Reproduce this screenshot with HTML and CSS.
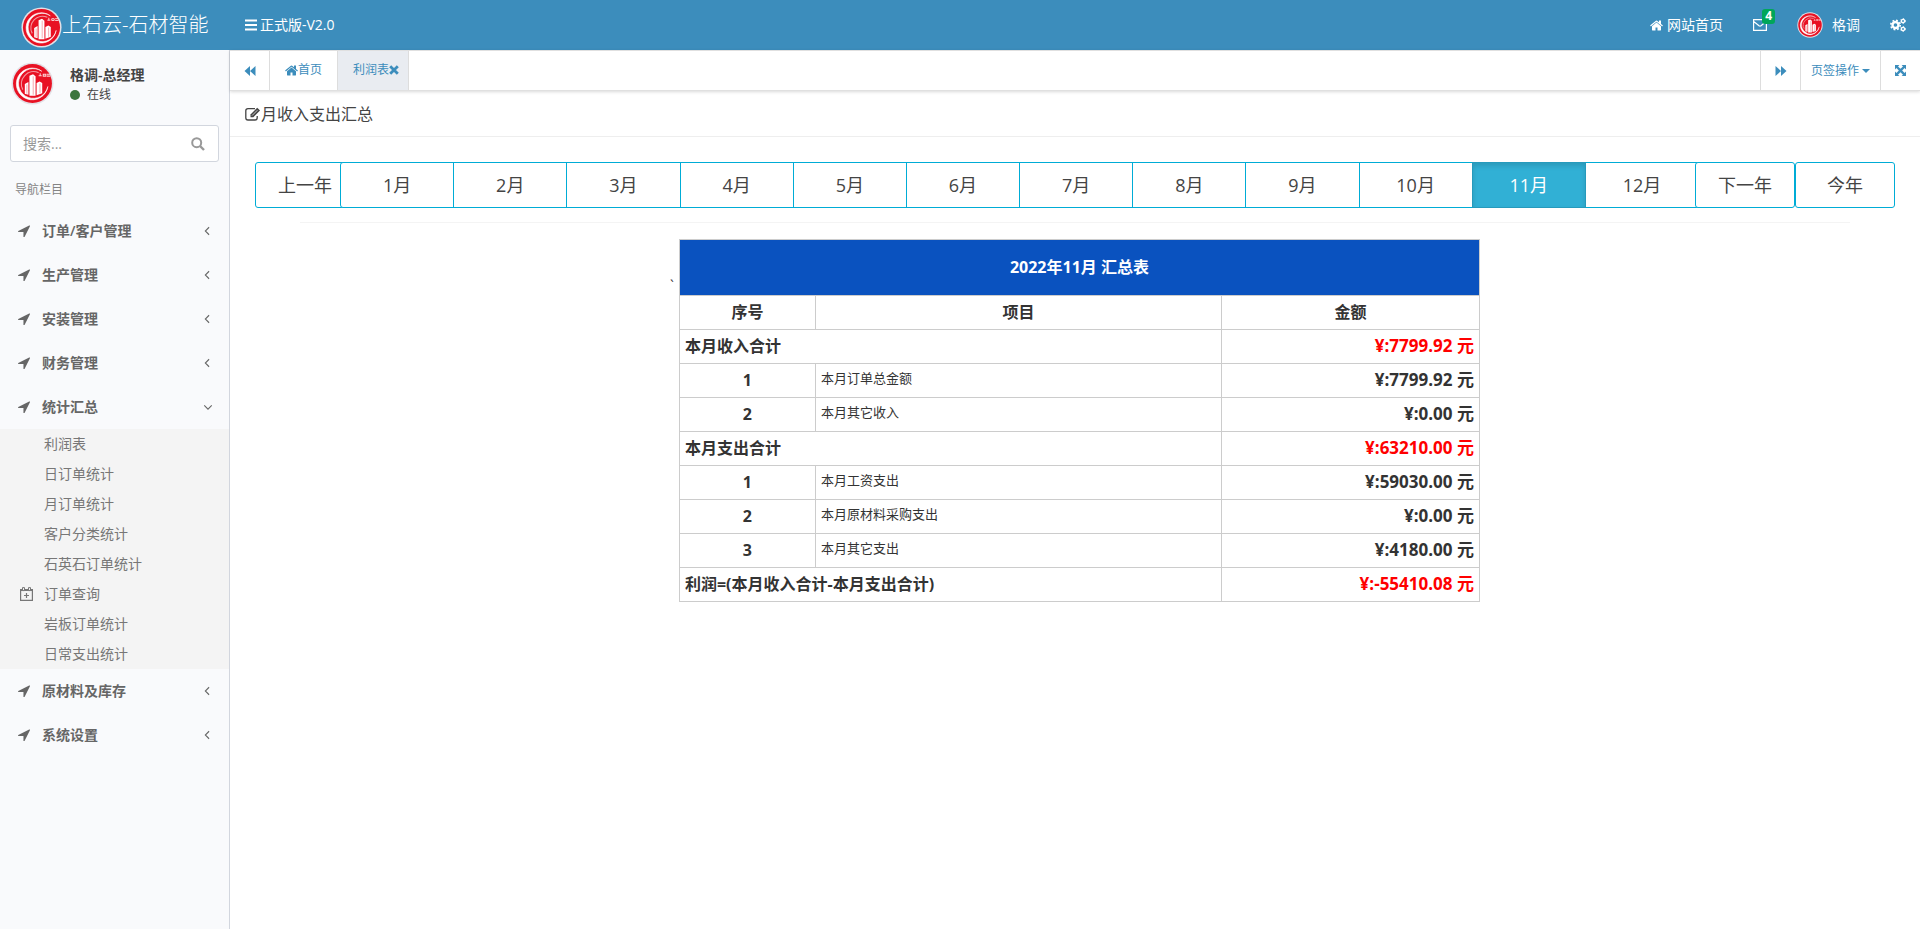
FILE: index.html
```
<!DOCTYPE html>
<html lang="zh-CN">
<head>
<meta charset="utf-8">
<title>上石云-石材智能</title>
<link rel="stylesheet" href="styles.css">
</head>
<body>
<svg class="defs" aria-hidden="true">
  <symbol id="logo" viewBox="0 0 42 42">
    <circle cx="21" cy="21" r="20.5" fill="#e3e0e6"/>
    <circle cx="21" cy="21" r="19" fill="#e81123"/>
    <path d="M30 9A15.500 15.500 0 1 0 36 24 14.500 14.500 0 1 1 30 9z" fill="#fff" stroke="#fff" stroke-width=".6"/>
    <path d="M27 10.500A12 12 0 0 0 11.500 27" fill="none" stroke="#f4959d" stroke-width="1.200"/>
    <path d="M13.500 31V21.500l3.500-2V32zM18 33V13.500l3.500-1.500 2.500 2v19zM25 32.500V20.500l3-1.500 2.500 1.500v10z" fill="#fff"/>
    <path d="M21.700 14v18M28.300 21v9.500M15.500 22v9" stroke="#f4959d" stroke-width=".8"/>
    <path d="M27 13.500h3M28.500 11v2.500M31.500 12h2.500v1.800h-2.500zM35 12h3.500M35 13.800h3.500" fill="none" stroke="#fbd5d8" stroke-width="1"/>
  </symbol>
  <symbol id="home" viewBox="0 0 1664 1536"><path d="M1408 928v480q0 26-19 45t-45 19H960v-384H704v384H320q-26 0-45-19t-19-45V928q0-1 .5-3t.5-3l575-474 575 474q1 2 1 6zm223-69l-62 74q-8 9-21 11h-3q-13 0-21-7L832 360 140 937q-12 8-24 7-13-2-21-11l-62-74q-8-10-7-23.500T37 814l719-599q32-26 76-26t76 26l244 204V224q0-14 9-23t23-9h192q14 0 23 9t9 23v408l219 182q10 8 11 21.500t-7 23.500z"/></symbol>
  <symbol id="arrow" viewBox="0 0 1408 1408"><path d="M1401 137l-640 1280q-17 35-57 35-5 0-15-2-22-5-35.500-22.500T640 1388V812H64q-22 0-39.500-13.500T2 763t4-42 29-30L1315 51q13-7 29-7 27 0 45 19 15 14 18.500 34.500T1401 137z"/></symbol>
  <symbol id="left" viewBox="0 0 8 12"><path d="M6.500 1.500 2 6l4.500 4.500" fill="none" stroke="currentColor" stroke-width="1.300"/></symbol>
  <symbol id="down" viewBox="0 0 12 8"><path d="M1.500 1.500 6 6l4.500-4.500" fill="none" stroke="currentColor" stroke-width="1.300"/></symbol>
  <symbol id="back" viewBox="0 0 12 10"><path d="M6 0v10L0.500 5zM11.500 0v10L6 5z"/></symbol>
  <symbol id="forward" viewBox="0 0 12 10"><path d="M6 0v10l5.500-5zM.5 0v10L6 5z"/></symbol>
  <symbol id="cogs" viewBox="0 0 16 14">
    <circle cx="5.500" cy="7" r="3" fill="none" stroke="currentColor" stroke-width="2.400"/>
    <circle cx="5.500" cy="7" r="4.700" fill="none" stroke="currentColor" stroke-width="1.600" stroke-dasharray="1.850 1.840"/>
    <circle cx="13" cy="3" r="1.600" fill="none" stroke="currentColor" stroke-width="1.300"/>
    <circle cx="13" cy="3" r="2.400" fill="none" stroke="currentColor" stroke-width="1" stroke-dasharray="1.260 1.250"/>
    <circle cx="13" cy="11" r="1.600" fill="none" stroke="currentColor" stroke-width="1.300"/>
    <circle cx="13" cy="11" r="2.400" fill="none" stroke="currentColor" stroke-width="1" stroke-dasharray="1.260 1.250"/>
  </symbol>
</svg>

<header class="topbar">
  <a class="brand" href="#"><svg class="brand-logo"><use href="#logo"/></svg><span>上石云-石材智能</span></a>
  <button class="version" type="button"><svg class="bars" viewBox="0 0 12 12"><path d="M0 1.500h12M0 6h12M0 10.500h12" stroke="currentColor" stroke-width="2"/></svg>正式版-V2.0</button>
  <nav class="top-links">
    <a class="top-link" href="#"><svg class="icon-home"><use href="#home"/></svg>网站首页</a>
    <a class="top-link mail" href="#" aria-label="消息"><svg class="icon-mail" viewBox="0 0 14 12"><path d="M.6.600h12.800v10.800H.6zM.6 2.500Q4 5 6 6.700q1 .7 2 0Q10 5 13.400 2.500" fill="none" stroke="currentColor" stroke-width="1.200"/></svg><span class="badge">4</span></a>
    <a class="top-link user" href="#"><svg class="avatar-small"><use href="#logo"/></svg>格调</a>
    <a class="top-link last" href="#" aria-label="设置"><svg class="icon-cogs"><use href="#cogs"/></svg></a>
  </nav>
</header>

<div class="layout">
  <aside class="sidebar">
    <div class="profile">
      <svg class="avatar"><use href="#logo"/></svg>
      <div><p class="name">格调-总经理</p><p class="status"><i class="dot"></i>在线</p></div>
    </div>
    <form class="search">
      <input type="text" placeholder="搜索..." aria-label="搜索">
      <button type="button" aria-label="搜索"><svg viewBox="0 0 14 14"><circle cx="5.700" cy="5.700" r="4.500" fill="none" stroke="currentColor" stroke-width="2"/><path d="m9 9 4 4" stroke="currentColor" stroke-width="2.400"/></svg></button>
    </form>
    <p class="nav-title">导航栏目</p>
    <nav class="menu">
      <a class="item" href="#"><svg class="nav-icon"><use href="#arrow"/></svg><span>订单/客户管理</span><svg class="chev"><use href="#left"/></svg></a>
      <a class="item" href="#"><svg class="nav-icon"><use href="#arrow"/></svg><span>生产管理</span><svg class="chev"><use href="#left"/></svg></a>
      <a class="item" href="#"><svg class="nav-icon"><use href="#arrow"/></svg><span>安装管理</span><svg class="chev"><use href="#left"/></svg></a>
      <a class="item" href="#"><svg class="nav-icon"><use href="#arrow"/></svg><span>财务管理</span><svg class="chev"><use href="#left"/></svg></a>
      <a class="item" href="#"><svg class="nav-icon"><use href="#arrow"/></svg><span>统计汇总</span><svg class="chev-down"><use href="#down"/></svg></a>
      <div class="submenu">
        <a href="#">利润表</a>
        <a href="#">日订单统计</a>
        <a href="#">月订单统计</a>
        <a href="#">客户分类统计</a>
        <a href="#">石英石订单统计</a>
        <a class="with-icon" href="#"><svg viewBox="0 0 13 14"><path d="M.6 2.600h11.800v10.800H.6z" fill="none" stroke="currentColor" stroke-width="1.200"/><path d="M.6 3.200h11.800" stroke="currentColor" stroke-width="1.600"/><path d="M2.500.6h2v3h-2zM8.500.6h2v3h-2z" fill="#f4f4f4" stroke="currentColor"/><path d="M6.500 6v5M4 8.500h5" stroke="currentColor" stroke-width="1.200"/></svg>订单查询</a>
        <a href="#">岩板订单统计</a>
        <a href="#">日常支出统计</a>
      </div>
      <a class="item" href="#"><svg class="nav-icon"><use href="#arrow"/></svg><span>原材料及库存</span><svg class="chev"><use href="#left"/></svg></a>
      <a class="item" href="#"><svg class="nav-icon"><use href="#arrow"/></svg><span>系统设置</span><svg class="chev"><use href="#left"/></svg></a>
    </nav>
  </aside>

  <main class="main">
    <div class="tabs">
      <button class="tab-tool" type="button" aria-label="向左"><svg class="icon-step"><use href="#back"/></svg></button>
      <a class="tab" href="#"><svg class="icon-tab-home"><use href="#home"/></svg>首页</a>
      <a class="tab active" href="#">利润表<svg class="icon-close" viewBox="0 0 10 10"><path d="m1.200 1.200 7.600 7.600m0-7.600L1.200 8.800" stroke="currentColor" stroke-width="2.800"/></svg></a>
      <span class="spacer"></span>
      <button class="tab-tool right" type="button" aria-label="向右"><svg class="icon-step"><use href="#forward"/></svg></button>
      <button class="tab-tool right wide" type="button">页签操作<i class="caret"></i></button>
      <button class="tab-tool right" type="button" aria-label="全屏"><svg class="icon-full" viewBox="0 0 12 12"><path d="M0 0h4.800L3.300 1.500 6 4.200l2.700-2.700L7.200 0H12v4.800l-1.500-1.500L7.800 6l2.700 2.700L12 7.200V12H7.200l1.500-1.500L6 7.800l-2.700 2.700L4.800 12H0V7.200l1.500 1.500L4.200 6 1.500 3.300 0 4.800z"/></svg></button>
    </div>
    <h1 class="page-title"><svg class="icon-edit" viewBox="0 0 16 14"><path d="M10 1.600H3Q.8 1.600.8 3.800v7Q.8 13 3 13h7q2.200 0 2.200-2.200V9" fill="none" stroke="currentColor" stroke-width="1.300"/><path d="m5.500 7.500 6.700-6.700 2.800 2.800-6.700 6.700H5.500z"/><path d="m7 8.600 5.400-5.400" stroke="#fff" stroke-width=".7"/></svg>月收入支出汇总</h1>
    <section class="content">
      <div class="periods">
        <button class="period prev" type="button">上一年</button>
        <div class="months">
          <button type="button">1月</button><button type="button">2月</button><button type="button">3月</button><button type="button">4月</button><button type="button">5月</button><button type="button">6月</button><button type="button">7月</button><button type="button">8月</button><button type="button">9月</button><button type="button">10月</button><button class="current" type="button">11月</button><button type="button">12月</button>
        </div>
        <button class="period" type="button">下一年</button>
        <button class="period" type="button">今年</button>
      </div>
      <hr class="rule">
      <div class="report">
        <span class="tick">`</span>
        <table class="summary">
          <colgroup><col class="col-no"><col><col class="col-sum"></colgroup>
          <thead>
            <tr><th class="caption" colspan="3">2022年11月 汇总表</th></tr>
            <tr><th>序号</th><th>项目</th><th>金额</th></tr>
          </thead>
          <tbody>
            <tr><td class="total" colspan="2">本月收入合计</td><td class="sum red">¥:7799.92 元</td></tr>
            <tr><td class="no">1</td><td class="label">本月订单总金额</td><td class="sum">¥:7799.92 元</td></tr>
            <tr><td class="no">2</td><td class="label">本月其它收入</td><td class="sum">¥:0.00 元</td></tr>
            <tr><td class="total" colspan="2">本月支出合计</td><td class="sum red">¥:63210.00 元</td></tr>
            <tr><td class="no">1</td><td class="label">本月工资支出</td><td class="sum">¥:59030.00 元</td></tr>
            <tr><td class="no">2</td><td class="label">本月原材料采购支出</td><td class="sum">¥:0.00 元</td></tr>
            <tr><td class="no">3</td><td class="label">本月其它支出</td><td class="sum">¥:4180.00 元</td></tr>
            <tr><td class="total" colspan="2">利润=(本月收入合计-本月支出合计)</td><td class="sum red">¥:-55410.08 元</td></tr>
          </tbody>
        </table>
      </div>
    </section>
  </main>
</div>
</body>
</html>
```
FILE: styles.css
```
* { box-sizing: border-box; }
body {
  margin: 0;
  min-height: 100vh;
  display: flex;
  flex-direction: column;
  font: 14px/20px "Open Sans", "Noto Sans CJK SC", sans-serif;
  color: #333;
  background: #fff;
}
a { color: inherit; text-decoration: none; }
p, h1 { margin: 0; }
button, input { font: inherit; color: inherit; }
button { background: none; border: 0; padding: 0; cursor: pointer; }
svg { fill: currentColor; flex: none; }
.defs { position: absolute; width: 0; height: 0; }

.topbar { display: flex; height: 50px; background: #3c8dbc; color: #fff; }
.brand { display: flex; align-items: center; width: 230px; padding-left: 21px; font-size: 20px; font-weight: 300; }
.brand-logo { width: 41px; height: 41px; margin-top: 4px; }
.version { display: flex; align-items: center; gap: 3px; padding: 0 15px; }
.bars { width: 12px; height: 12px; }
.top-links { display: flex; margin-left: auto; }
.top-link { display: flex; align-items: center; padding: 0 15px; }
.top-link.last { padding-right: 14px; }
.icon-home { width: 13px; height: 12px; margin-right: 4px; }
.mail { position: relative; }
.icon-mail { width: 14px; height: 12px; }
.badge {
  position: absolute; top: 9px; right: 7px;
  padding: 2px 3px 3px; border-radius: 3px;
  background: #00a65a; font-size: 12px; line-height: 10px; font-weight: 700;
}
.avatar-small { width: 26px; height: 26px; margin-right: 9px; }
.icon-cogs { width: 16px; height: 14px; }

.layout { display: flex; flex: 1; }
.sidebar { width: 230px; flex: none; background: #f9fafc; border-right: 1px solid #d2d6de; color: #666; }
.profile { display: flex; align-items: center; gap: 16px; padding: 11px 11px 0; color: #444; }
.avatar { width: 43px; height: 43px; }
.name { padding-top: 4px; font-weight: 600; }
.status { display: flex; align-items: center; gap: 7px; font-size: 12px; }
.dot { width: 10px; height: 10px; border-radius: 50%; background: #3c763d; }
.search { display: flex; margin: 20px 10px 0; height: 37px; border: 1px solid #d2d6de; border-radius: 3px; background: #fff; }
.search input { flex: 1; min-width: 0; border: 0; padding: 0 12px; background: none; outline: none; }
.search input::placeholder { color: #999; opacity: 1; }
.search button { width: 40px; color: #999; display: grid; place-items: center; }
.search svg { width: 14px; height: 14px; }
.nav-title { padding: 18px 15px 9px; font-size: 12px; color: #848484; }
.item { display: flex; align-items: center; height: 44px; padding: 0 17px 0 18px; font-weight: 600; }
.item span { flex: 1; }
.nav-icon { width: 12px; height: 12px; margin-right: 12px; }
.chev { width: 8px; height: 10px; margin-right: 1px; }
.chev-down { width: 10px; height: 7px; margin-right: -1px; }
.submenu { background: #f4f4f4; color: #777; }
.submenu a { display: flex; align-items: center; height: 30px; padding-left: 44px; }
.submenu .with-icon { padding-left: 20px; gap: 11px; }
.with-icon svg { width: 13px; height: 14px; }

.main { flex: 1; min-width: 0; }
.tabs { display: flex; height: 41px; border: 1px solid #e0e0e0; border-width: 1px 0; box-shadow: 0 1px 3px rgba(0, 0, 0, .15); color: #3c8dbc; font-size: 12px; }
.tab-tool { width: 40px; display: flex; align-items: center; justify-content: center; border-right: 1px solid #ddd; }
.tab-tool.right { border-right: 0; border-left: 1px solid #ddd; }
.tab-tool.wide { width: 80px; gap: 3px; }
.tab { display: flex; align-items: center; padding: 0 15px 2px; border-right: 1px solid #ddd; }
.tab.active { background: #e9ecf1; padding: 0 9px 2px 15px; }
.spacer { flex: 1; }
.icon-step { width: 12px; height: 10px; }
.icon-tab-home { width: 13px; height: 12px; }
.icon-close { width: 10px; height: 10px; }
.icon-full { width: 11px; height: 11px; }
.caret { border: 4px solid transparent; border-top-color: currentColor; border-bottom: 0; }
.page-title { display: flex; align-items: center; height: 46px; padding: 0 15px; border-bottom: 1px solid #eee; font-size: 16px; font-weight: 400; color: #444; }
.icon-edit { width: 16px; height: 14px; }

.content { padding: 25px; }
.periods { display: flex; font-size: 18px; color: #444; }
.periods button { height: 46px; border: 1px solid #00acd6; background: #fff; }
.period { width: 100px; flex: none; border-radius: 3px; position: relative; }
.prev { margin-right: -15px; }
.months { display: flex; flex: 1; position: relative; margin-right: -4px; }
.months button { flex: 1; margin-left: -1px; }
.months button:first-child { margin-left: 0; border-radius: 3px 0 0 3px; }
.months .current { background: #31b0d5; border-color: #269abc; color: #fff; box-shadow: inset 0 3px 5px rgba(0, 0, 0, .125); position: relative; }
.rule { margin: 14px 45px 16px; border: 0; border-top: 1px solid #f4f4f4; }
.report { display: flex; justify-content: center; }
.tick { padding: 37px 5px 0 0; }
.summary { width: 801px; table-layout: fixed; border-collapse: collapse; font-size: 16px; line-height: 22px; font-weight: 700; color: #333; }
.col-no { width: 136px; }
.col-sum { width: 258px; }
.summary th, .summary td { height: 34px; padding: 0 5px 1px; border: 1px solid #ccc; }
.summary .caption { height: 56px; background: #0a52bf; color: #fff; }
.no { text-align: center; }
.summary .label { padding-top: 3px; vertical-align: top; font-size: 13px; font-weight: 400; }
.sum { text-align: right; font-size: 17px; }
.red { color: red; }
```
